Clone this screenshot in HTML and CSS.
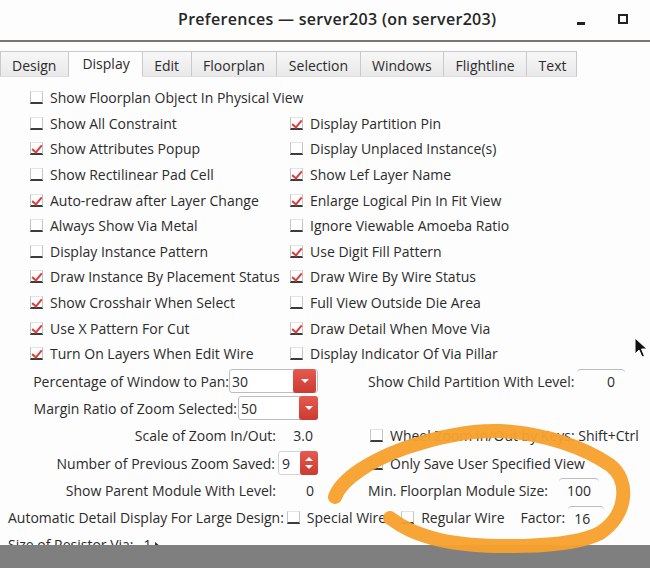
FILE: index.html
```html
<!DOCTYPE html>
<html>
<head>
<meta charset="utf-8">
<link rel="stylesheet" href="styles.css">
</head>
<body>
<div class="window">
  <header class="titlebar">
    <span class="title">Preferences — server203 (on server203)</span>
    <span class="win-min"></span>
    <span class="win-max"></span>
  </header>

  <nav class="tabs">
    <span class="tab tab-first">Design</span>
    <span class="tab tab-active">Display</span>
    <span class="tab">Edit</span>
    <span class="tab">Floorplan</span>
    <span class="tab">Selection</span>
    <span class="tab">Windows</span>
    <span class="tab">Flightline</span>
    <span class="tab tab-last">Text</span>
  </nav>

  <section class="checks">
    <label class="chk"><span class="box"></span>Show Floorplan Object In Physical View</label>
    <span class="empty"></span>
    <label class="chk"><span class="box"></span>Show All Constraint</label>
    <label class="chk"><span class="box on"></span>Display Partition Pin</label>
    <label class="chk"><span class="box on"></span>Show Attributes Popup</label>
    <label class="chk"><span class="box"></span>Display Unplaced Instance(s)</label>
    <label class="chk"><span class="box"></span>Show Rectilinear Pad Cell</label>
    <label class="chk"><span class="box on"></span>Show Lef Layer Name</label>
    <label class="chk"><span class="box on"></span>Auto-redraw after Layer Change</label>
    <label class="chk"><span class="box on"></span>Enlarge Logical Pin In Fit View</label>
    <label class="chk"><span class="box"></span>Always Show Via Metal</label>
    <label class="chk"><span class="box"></span>Ignore Viewable Amoeba Ratio</label>
    <label class="chk"><span class="box"></span>Display Instance Pattern</label>
    <label class="chk"><span class="box on"></span>Use Digit Fill Pattern</label>
    <label class="chk"><span class="box on"></span>Draw Instance By Placement Status</label>
    <label class="chk"><span class="box on"></span>Draw Wire By Wire Status</label>
    <label class="chk"><span class="box on"></span>Show Crosshair When Select</label>
    <label class="chk"><span class="box"></span>Full View Outside Die Area</label>
    <label class="chk"><span class="box on"></span>Use X Pattern For Cut</label>
    <label class="chk"><span class="box on"></span>Draw Detail When Move Via</label>
    <label class="chk"><span class="box on"></span>Turn On Layers When Edit Wire</label>
    <label class="chk"><span class="box"></span>Display Indicator Of Via Pillar</label>
  </section>

  <section class="form">
    <div class="frow">
      <div class="fleft">
        <span class="flabel">Percentage of Window to Pan:</span>
        <span class="combo combo-a">30<span class="redbtn"><span class="tri-down"></span></span></span>
      </div>
      <div class="fright fright-fixed">
        <span class="flabel">Show Child Partition With Level:</span>
        <span class="field field-child">0</span>
      </div>
    </div>
    <div class="frow">
      <div class="fleft">
        <span class="flabel">Margin Ratio of Zoom Selected:</span>
        <span class="combo combo-b">50<span class="redbtn"><span class="tri-down"></span></span></span>
      </div>
      <div class="fright"></div>
    </div>
    <div class="frow">
      <div class="fleft">
        <span class="flabel">Scale of Zoom In/Out:</span>
        <span class="value value-scale">3.0</span>
      </div>
      <div class="fright">
        <label class="chk"><span class="box"></span>Wheel Zoom In/Out by Keys: Shift+Ctrl</label>
      </div>
    </div>
    <div class="frow">
      <div class="fleft">
        <span class="flabel">Number of Previous Zoom Saved:</span>
        <span class="combo combo-d">9<span class="redbtn spin"><span class="tri-up"></span><span class="tri-down"></span></span></span>
      </div>
      <div class="fright">
        <label class="chk"><span class="box"></span>Only Save User Specified View</label>
      </div>
    </div>
    <div class="frow">
      <div class="fleft">
        <span class="flabel">Show Parent Module With Level:</span>
        <span class="value value-parent">0</span>
      </div>
      <div class="fright">
        <span class="flabel">Min. Floorplan Module Size:</span>
        <span class="field field-min">100</span>
      </div>
    </div>
    <div class="frow frow-wide">
      <span class="flabel">Automatic Detail Display For Large Design:</span>
      <span class="box"></span>
      <span class="wide-item">Special Wire</span>
      <span class="box box-second"></span>
      <span class="wide-item">Regular Wire</span>
      <span class="factor">Factor:</span>
      <span class="field field-factor">16</span>
    </div>
    <div class="frow frow-wide">
      <span class="flabel">Size of Resistor Via:</span>
      <span class="resist">1 <span class="tri-right"></span></span>
    </div>
  </section>
</div>

<div class="taskbar"></div>

<svg class="annot" width="650" height="568" viewBox="0 0 650 568">
  <path d="M 335 497 C 342 478 372 460 405 448 C 440 436 470 430 500 431 C 545 433 585 448 610 465 C 630 480 628 515 600 533 C 570 549 480 549 440 540 C 415 534 402 527 390 518" fill="none" stroke="#f6a12e" stroke-width="14" stroke-linecap="round" stroke-linejoin="round" opacity="0.96"/>
</svg>

<svg class="cursor" width="16" height="22" viewBox="0 0 16 22">
  <path d="M1 1 L1 17 L5 13 L8 20 L10.5 19 L7.5 12 L13 12 Z" fill="#111" stroke="#fff" stroke-width="1"/>
</svg>
</body>
</html>
```

FILE: styles.css
```css
* { box-sizing: border-box; }

html, body {
  margin: 0;
  padding: 0;
  width: 650px;
  height: 568px;
  overflow: hidden;
  background: #fdfdfd;
}

body {
  font-family: "Open Sans", "Noto Sans", "DejaVu Sans", sans-serif;
  font-size: 14px;
  color: #2b2b2b;
  position: relative;
}

.window {
  display: flex;
  flex-direction: column;
}

/* title bar */
.titlebar {
  height: 42px;
  border-bottom: 2px solid #7b7670;
  display: flex;
  align-items: center;
  position: relative;
}
.title {
  position: absolute;
  left: 178px;
  top: 8px;
  font-size: 16px;
  font-weight: 600;
  color: #262626;
  letter-spacing: 0.3px;
}
.win-min {
  position: absolute;
  left: 577px;
  top: 22px;
  width: 8px;
  height: 3px;
  background: #222;
}
.win-max {
  position: absolute;
  left: 618px;
  top: 14px;
  width: 10px;
  height: 10px;
  border: 2px solid #222;
}

/* tabs */
.tabs {
  display: flex;
  margin-top: 9px;
  height: 26px;
  align-items: stretch;
}
.tab {
  display: flex;
  align-items: center;
  padding: 2px 11.5px 0 11.5px;
  font-size: 14px;
  color: #2b2b2b;
  background: linear-gradient(#f7f7f7, #e9e9e9);
  border: 1px solid #c9c9c9;
  border-left: none;
  border-bottom: 1px solid #dedede;
}
.tab-first {
  padding-left: 11px;
  padding-right: 12px;
  border-left: 1px solid #c9c9c9;
}
.tab-last {
  padding-right: 10px;
}
.tab-active {
  background: #fdfdfd;
  border-bottom-color: #fdfdfd;
  padding-top: 0;
  padding-bottom: 2px;
  padding-left: 13px;
  padding-right: 12px;
}

/* checkbox grid */
.checks {
  display: grid;
  grid-template-columns: 260px 1fr;
  grid-auto-rows: 25.6px;
  padding-left: 30px;
  margin-top: 8px;
}
.chk {
  display: flex;
  align-items: center;
  gap: 7px;
  white-space: nowrap;
}
.box {
  display: inline-block;
  flex: none;
  width: 13px;
  height: 13px;
  border: 1px solid #c4c4c4;
  border-top-color: #e4e4e4;
  border-bottom: 2px solid #3c3c3c;
  position: relative;
  background: #fff;
}
.box.on::after {
  content: "";
  position: absolute;
  left: 3px;
  top: 0px;
  width: 4px;
  height: 8px;
  border-right: 2.5px solid #d8413a;
  border-bottom: 2.5px solid #d8413a;
  transform: rotate(40deg);
}

/* form */
.form {
  display: flex;
  flex-direction: column;
  margin-top: 1px;
}
.frow {
  display: flex;
  align-items: center;
  height: 27.3px;
  white-space: nowrap;
}
.fleft {
  width: 318px;
  flex: none;
  display: flex;
  justify-content: flex-end;
  align-items: center;
}
.fright {
  padding-left: 50px;
  display: flex;
  align-items: center;
}
.fright-fixed {
  width: 307px;
  flex: none;
}
.flabel { white-space: nowrap; }

.combo {
  position: relative;
  height: 24px;
  display: flex;
  align-items: center;
  padding-left: 2px;
  border: 1px solid #bdbdbd;
  border-radius: 3px;
  background: #fff;
}
.combo-a { width: 89px; }
.combo-b { width: 80px; margin-left: 1px; }
.combo-d { width: 40px; margin-left: 3px; padding-left: 3px; border-color: #d2d2d2; }
.redbtn {
  position: absolute;
  right: 1px;
  top: -1px;
  width: 23px;
  height: 24px;
  border-radius: 3px;
  background: linear-gradient(#e55a50, #cc3a31);
  display: flex;
  align-items: center;
  justify-content: center;
}
.combo-b .redbtn { width: 19px; right: -1px; }
.redbtn.spin {
  width: 18px;
  right: -1px;
  flex-direction: column;
  gap: 4px;
}
.tri-down {
  width: 0; height: 0;
  border-left: 4px solid transparent;
  border-right: 4px solid transparent;
  border-top: 4px solid #fff;
}
.tri-up {
  width: 0; height: 0;
  border-left: 4px solid transparent;
  border-right: 4px solid transparent;
  border-bottom: 4px solid #fff;
}
.tri-right {
  display: inline-block;
  width: 0; height: 0;
  border-top: 4px solid transparent;
  border-bottom: 4px solid transparent;
  border-left: 5px solid #2b2b2b;
}

.value {
  width: 42px;
  text-align: right;
  padding-right: 5px;
}
.value-parent { padding-right: 4px; }

.field {
  height: 24px;
  display: flex;
  align-items: center;
  justify-content: flex-end;
  border-top: 1px solid #bbb;
  border-radius: 4px 4px 0 0;
  padding-right: 10px;
}
.field-child { width: 48px; margin-left: auto; }
.field-min { width: 40px; margin-left: 11px; padding-right: 8px; }
.field-factor { width: 36px; margin-left: 3px; justify-content: flex-start; padding-left: 6px; }

.fright .chk { margin-left: 2px; }

.frow-wide {
  padding-left: 8px;
}
.frow-wide .box { margin-left: 3px; }
.wide-item { margin-left: 7px; }
.frow-wide .box-second { margin-left: 15px; }
.factor { margin-left: 16px; }
.resist { margin-left: 10px; }

/* overlays */
.taskbar {
  position: absolute;
  left: 0;
  right: 0;
  bottom: 0;
  height: 23px;
  background: #7f7f7f;
}
.annot {
  position: absolute;
  left: 0;
  top: 0;
  pointer-events: none;
}
.cursor {
  position: absolute;
  left: 634px;
  top: 337px;
}
```
